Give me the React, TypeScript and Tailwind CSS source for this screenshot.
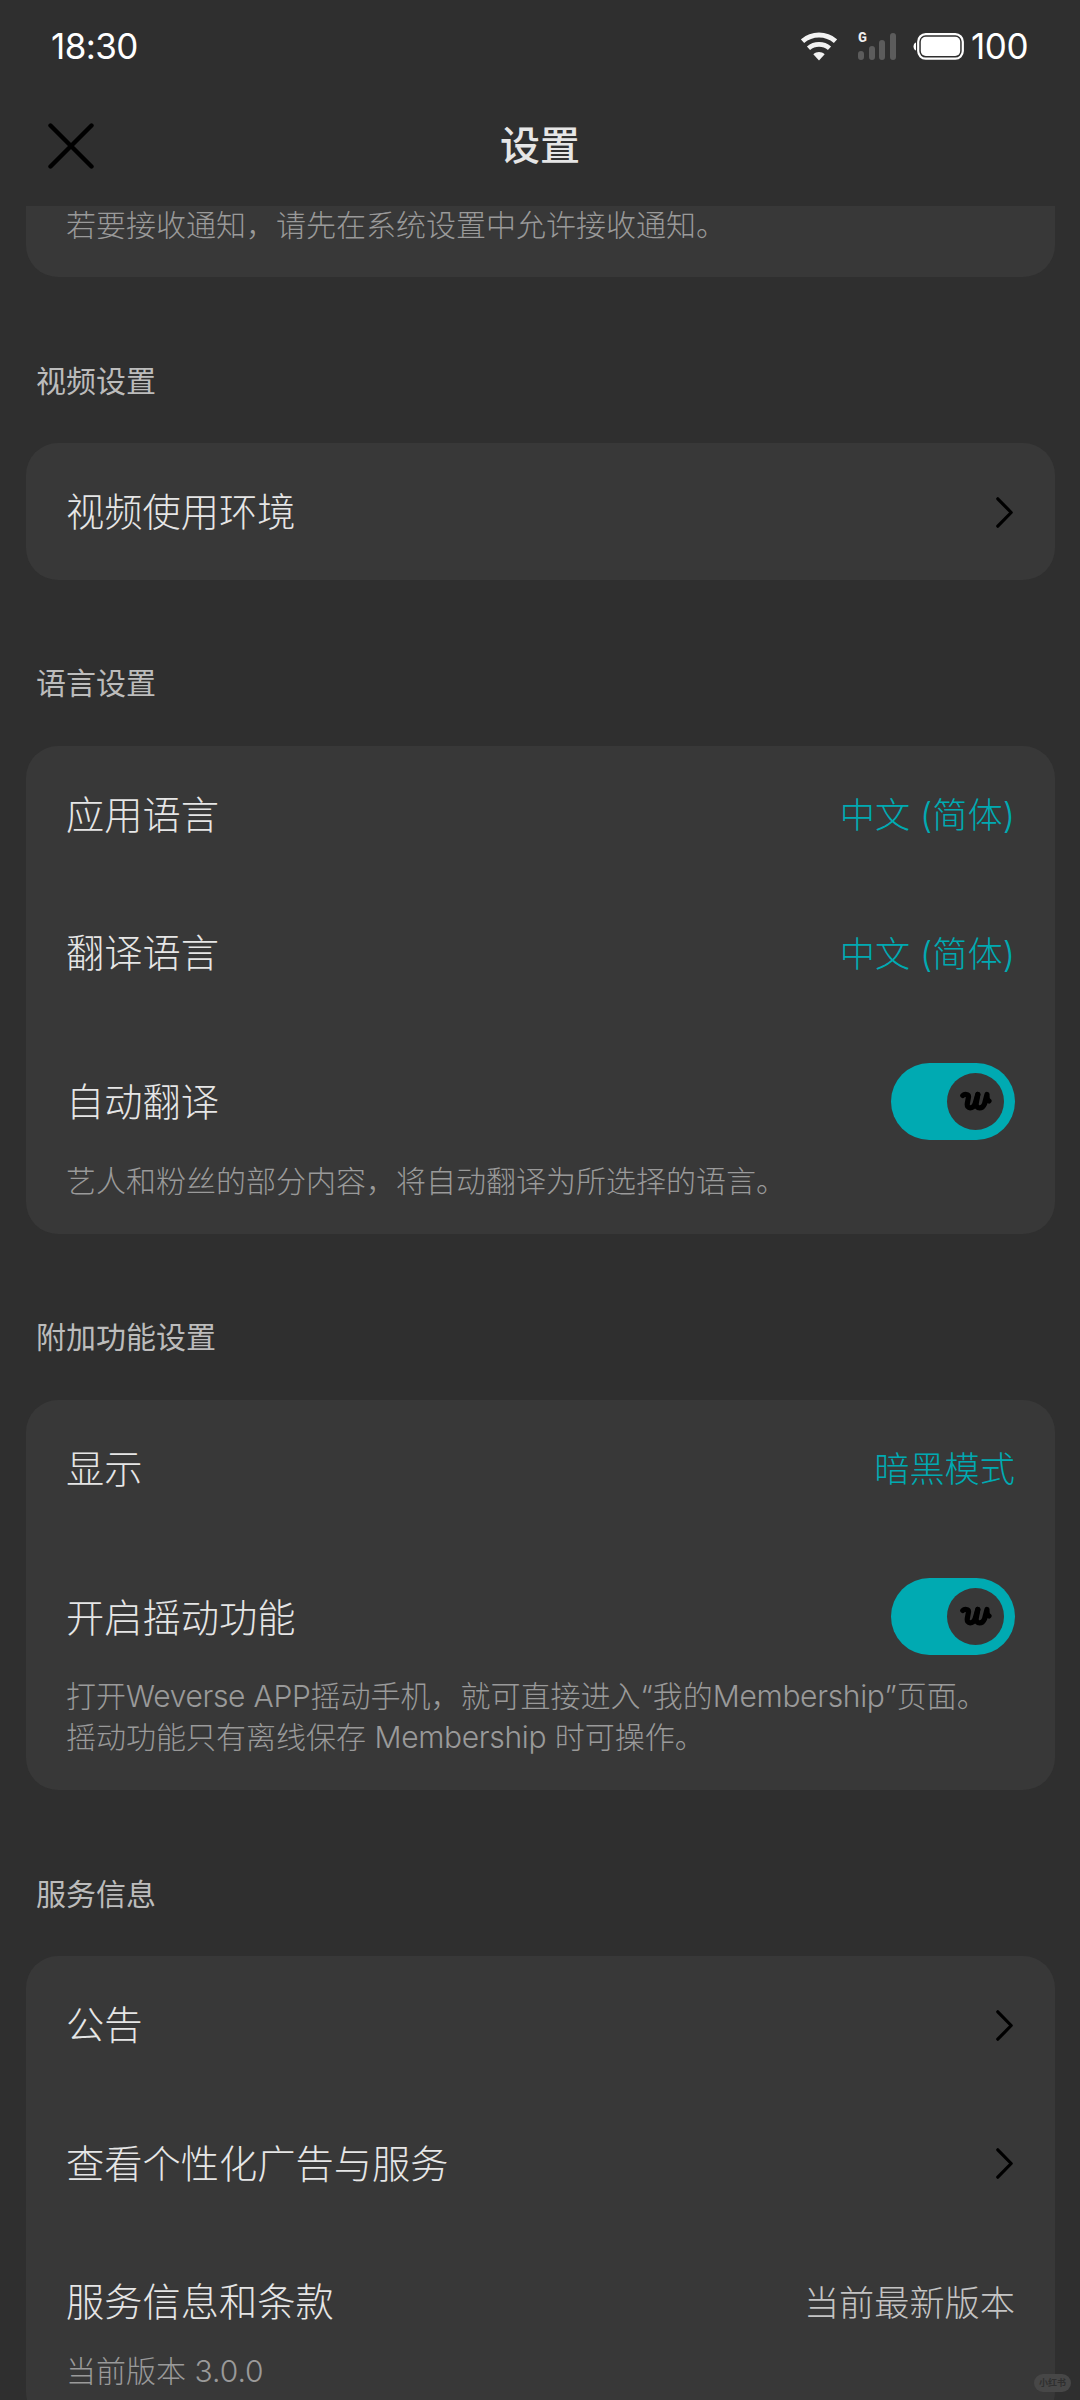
import React, { useState } from 'react';

type RowData = {
  label: string;
  value?: string;
  tone?: 'accent' | 'muted';
  arrow?: boolean;
  toggle?: boolean;
  hint?: string[];
};

type SectionData = {
  title: string;
  rows: RowData[];
};

const sections: SectionData[] = [
  {
    title: '视频设置',
    rows: [{ label: '视频使用环境', arrow: true }],
  },
  {
    title: '语言设置',
    rows: [
      { label: '应用语言', value: '中文 (简体)', tone: 'accent' },
      { label: '翻译语言', value: '中文 (简体)', tone: 'accent' },
      { label: '自动翻译', toggle: true, hint: ['艺人和粉丝的部分内容，将自动翻译为所选择的语言。'] },
    ],
  },
  {
    title: '附加功能设置',
    rows: [
      { label: '显示', value: '暗黑模式', tone: 'accent' },
      {
        label: '开启摇动功能',
        toggle: true,
        hint: [
          '打开Weverse APP摇动手机，就可直接进入“我的Membership”页面。',
          '摇动功能只有离线保存 Membership 时可操作。',
        ],
      },
    ],
  },
  {
    title: '服务信息',
    rows: [
      { label: '公告', arrow: true },
      { label: '查看个性化广告与服务', arrow: true },
      { label: '服务信息和条款', value: '当前最新版本', tone: 'muted', hint: ['当前版本 3.0.0'] },
    ],
  },
];

function WifiIcon() {
  return (
    <svg width="36" height="29" viewBox="0 0 36 29" fill="none">
      <path d="M1.500 9.200C11 1 25 1 34.500 9.200" stroke="#f2f2f2" strokeWidth="5" />
      <path d="M7.500 16.200C13.500 11 22.500 11 28.500 16.200" stroke="#f2f2f2" strokeWidth="4.800" />
      <path d="M12.300 22.200C15.500 19.300 20.500 19.300 23.700 22.200L18 28.500Z" fill="#f2f2f2" />
    </svg>
  );
}

function SignalIcon() {
  return (
    <div className="relative flex h-7 w-[38px] items-end justify-between">
      <span className="absolute -top-px left-0 font-['Liberation_Mono',monospace] text-[15px] leading-[15px] font-bold text-[#eeeeee]">G</span>
      <span className="h-[9px] w-1.5 rounded-full bg-[#5c5c5c]" />
      <span className="h-3.5 w-1.5 rounded-full bg-[#5c5c5c]" />
      <span className="h-5 w-1.5 rounded-full bg-[#5c5c5c]" />
      <span className="h-[27px] w-1.5 rounded-full bg-[#5c5c5c]" />
    </div>
  );
}

function BatteryIcon() {
  return (
    <svg width="51" height="27" viewBox="0 0 51 27" fill="none">
      <path d="M3 9.500C-0.300 10.500 -0.300 16.500 3 17.500Z" fill="#fff" />
      <rect x="5.200" y="1.200" width="44.600" height="24.400" rx="7.500" stroke="#fff" strokeWidth="2.200" />
      <rect x="7.800" y="3.800" width="39.400" height="19.200" rx="5" fill="#fff" />
    </svg>
  );
}

function StatusBar() {
  return (
    <div className="flex h-[92px] items-center justify-between pr-[52px] pl-[51px] font-['Inter','Noto_Sans_CJK_SC',sans-serif] text-[35px] text-white">
      <span className="tracking-[-0.6px]">18:30</span>
      <div className="flex items-center">
        <WifiIcon />
        <div className="ml-[21px]">
          <SignalIcon />
        </div>
        <div className="mr-[7px] ml-[17px]">
          <BatteryIcon />
        </div>
        <span className="tracking-[-0.5px]">100</span>
      </div>
    </div>
  );
}

function Header() {
  return (
    <header className="grid h-[114px] grid-cols-[1fr_auto_1fr] items-center px-12 pb-[7px]">
      <button className="w-[46px]" aria-label="关闭">
        <svg width="46" height="46" viewBox="0 0 46 46" fill="none" stroke="#000" strokeWidth="4.400" strokeLinecap="round">
          <path d="M2.500 2.500L43.500 43.500M43.500 2.500L2.500 43.500" />
        </svg>
      </button>
      <h1 className="text-[40px] leading-none font-medium text-[#e6e6e6]">设置</h1>
    </header>
  );
}

function Switch() {
  const [on, setOn] = useState(true);

  return (
    <button
      role="switch"
      aria-checked={on}
      onClick={() => setOn(!on)}
      className={`flex h-[77px] w-[124px] items-center rounded-full px-[11px] ${on ? 'justify-end bg-[#00aab2]' : 'justify-start bg-[#5c5c5c]'}`}
    >
      <span className="flex size-[57px] items-center justify-center rounded-full bg-[#383838]">
        <svg width="32" height="21" viewBox="0 0 32 21" fill="none" stroke="#000" strokeWidth="5.200" strokeLinecap="round" strokeLinejoin="round">
          <path d="M2.800 4.500C4.500 2.800 8.800 3 8.500 6L7.300 12.500C6.500 18.300 13 18 15 13L17.800 3.500" />
          <path d="M17.800 3.500L16.200 12.500C15.800 18.500 22.500 18 24.500 13L27 3.500C26.800 7.500 27.800 9.300 29 10" />
        </svg>
      </span>
    </button>
  );
}

function Chevron() {
  return (
    <svg className="mr-0.5" width="17" height="31" viewBox="0 0 17 31" fill="none" stroke="#000" strokeWidth="3.200" strokeLinecap="round" strokeLinejoin="round">
      <path d="M1.800 1.800L15.200 15.500L1.800 29.200" />
    </svg>
  );
}

function Hint({ lines }: { lines: string[] }) {
  return (
    <div className="pb-8 text-[30px] leading-[41px] font-light text-[#9a9a9a]">
      {lines.map((line) => (
        <p key={line} className="whitespace-nowrap">
          {/* latin words are set a touch tighter than the chinese text */}
          {line.split(/([A-Za-z]+)/).map((part, index) =>
            /[A-Za-z]/.test(part) ? <span key={index} className="tracking-[-0.32px]">{part}</span> : part
          )}
        </p>
      ))}
    </div>
  );
}

function Row({ row, single }: { row: RowData; single: boolean }) {
  let height = single ? 'h-[136.5px] pt-0.5' : 'h-[138.5px]';
  if (row.toggle) {
    height = 'h-[138px] pt-[19px]';
  } else if (row.hint) {
    height = 'h-[118px] pt-[21px]';
  }

  return (
    <div>
      <div className={`flex items-center justify-between ${height}`}>
        <span className={`text-[38.25px] leading-none font-light text-[#e6e6e6] ${row.toggle ? 'pt-[3px]' : ''}`}>{row.label}</span>
        {row.value && (
          <span className={`pt-0.5 text-[35.2px] leading-none font-light ${row.tone === 'accent' ? 'text-[#00aab2]' : 'text-[#c4c4c4]'}`}>
            {row.value}
          </span>
        )}
        {row.arrow && <Chevron />}
        {row.toggle && <Switch />}
      </div>
      {row.hint && <Hint lines={row.hint} />}
    </div>
  );
}

function Section({ section }: { section: SectionData }) {
  return (
    <section>
      <h2 className="flex h-[166px] items-center pt-[41px] pl-2.5 text-[30px] leading-none text-[#bcbcbc]">{section.title}</h2>
      <div className="rounded-[32px] bg-[#383838] px-10">
        {section.rows.map((row) => (
          <Row key={row.label} row={row} single={section.rows.length === 1} />
        ))}
      </div>
    </section>
  );
}

export default function App() {
  return (
    <div className="relative h-[2400px] w-[1080px] overflow-hidden bg-[#2f2f2f] font-['Inter','Noto_Sans_CJK_SC',sans-serif]">
      <StatusBar />
      <Header />
      <main className="pr-[25px] pl-[26px]">
        {/* tail of the notification card, cut off by the header */}
        <div className="h-[71px] rounded-b-[32px] bg-[#383838] pl-10 text-[30px] leading-[38px] font-light text-[#9a9a9a]">
          若要接收通知，请先在系统设置中允许接收通知。
        </div>
        {sections.map((section) => (
          <Section key={section.title} section={section} />
        ))}
      </main>
      <div className="absolute top-[2374px] left-[1034px] flex h-[18px] w-[37px] items-center justify-center rounded-full bg-[#474747] text-[9px] font-bold text-[#2f2f2f]">
        小红书
      </div>
    </div>
  );
}
